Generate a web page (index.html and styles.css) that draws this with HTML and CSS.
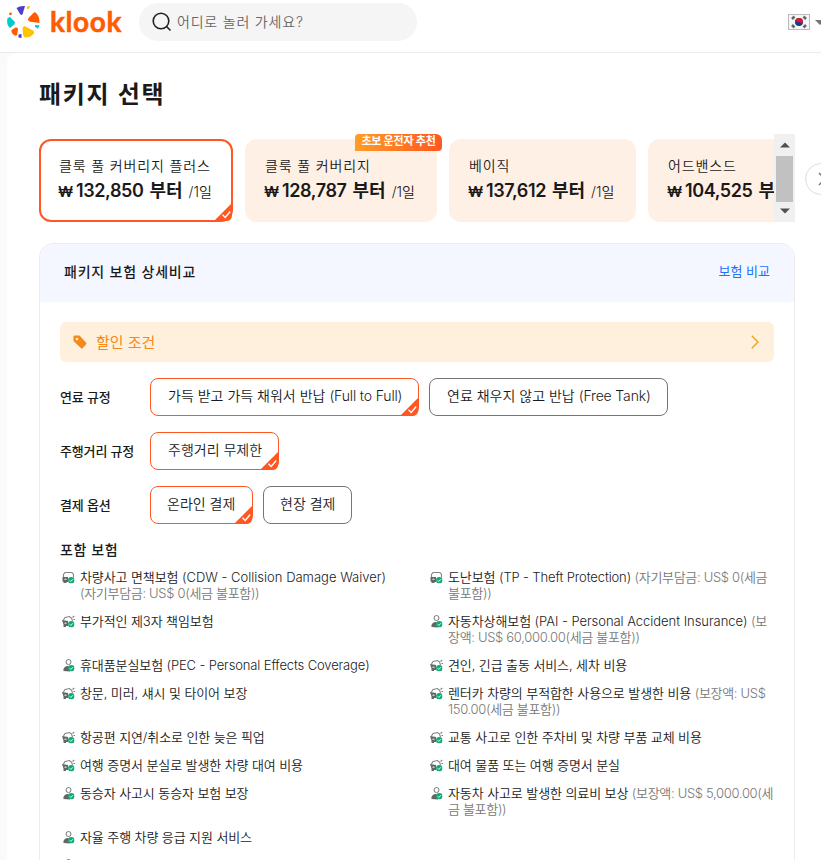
FILE: index.html
```html
<!DOCTYPE html>
<html lang="ko">
<head>
<meta charset="utf-8">
<title>패키지 선택</title>
<link rel="stylesheet" href="styles.css">
</head>
<body>
<svg class="defs" aria-hidden="true">
  <symbol id="ok" viewBox="0 0 6 6"><circle cx="3" cy="3" r="3" fill="#16aa77"/><path d="M1.500 3l1.100 1.100 1.900-2" fill="none" stroke="#fff" stroke-width=".8"/></symbol>
  <symbol id="car" viewBox="0 0 13 13"><path d="M1.500 6V3.500l1.500-2h7l1.500 2v3" fill="none" stroke="#858585" stroke-width="1.100"/><path d="M.5 6h5.500v5H4.500v1H1.500v-1.500H.5z" fill="#666"/><path d="M2.500 8.200h2" stroke="#fff"/><use href="#ok" x="6" y="6" width="6.500" height="6.500"/></symbol>
  <symbol id="crash" viewBox="0 0 13 13"><path d="M1.200 5.500l1.800-3 4.500-1 2 1.500 1 3M10.500 2.500l1.800-1.500M11.500 4.500h1.500" fill="none" stroke="#858585" stroke-width="1.100"/><path d="M0 5l6 1v5H4v1H1.500V9.500z" fill="#666"/><path d="M2.500 8.200h2" stroke="#fff"/><use href="#ok" x="6" y="6" width="6.500" height="6.500"/></symbol>
  <symbol id="person" viewBox="0 0 13 13"><circle cx="6.500" cy="3" r="2.500" fill="none" stroke="#777" stroke-width="1"/><path d="M1.500 12c-.5-3 1.500-5 5-5L8 12.500z" fill="#666"/><use href="#ok" x="6" y="6" width="6.500" height="6.500"/></symbol>
  <symbol id="corner" viewBox="0 0 18 18"><path d="M18 0v12q0 6-6 6H0z" fill="#ff5722"/><path d="M8.500 11.800l2.700 2.700 5-6" fill="none" stroke="#fff" stroke-width="1.400"/></symbol>
</svg>
<header class="top">
  <svg class="logo" width="34" height="34" viewBox="0 0 34 34">
    <path d="M10.500 3Q14 .5 19 1l-2.500 8.500q-1 1-2.500-.5z" fill="#4b3fc9"/>
    <path d="M21 1.500l3-.5-1 2.500-2 .8z" fill="#ffc400"/>
    <path d="M22.500 13l5-5q1.500-1.500 3 .5 3.500 4 3 9.500l-9-1.200q-3.500-.8-2-3.800z" fill="#ff5b00"/>
    <path d="M29 20l4.500.3-1.500 3.500-3-2z" fill="#00cbd1"/>
    <path d="M18.500 21l8.500 4.500q2 2 .5 3.500-3 3.500-8 3.500-2-.5-2.500-3l-.5-6q0-2 2-2.500z" fill="#ffc400"/>
    <path d="M12.500 29.500l3-.5v4l-3-.5z" fill="#4b3fc9"/>
    <path d="M5.500 25l4-2.500q2.500-.5 2.500 1.500l-.8 5.500q-.7 2-2.500 1Q5 28 5.500 25z" fill="#ff5b00"/>
    <path d="M1.500 13l2.500-1 4.500 4.500q1 2.500-1 3.500L4 23Q0 20 1.500 13z" fill="#00cbd1"/>
    <circle cx="4.500" cy="8.800" r="1.400" fill="#ff5b00"/>
  </svg>
  <span class="word">klook</span>
  <div class="search">
    <svg width="20" height="20" viewBox="0 0 20 20" fill="none" stroke="#212121" stroke-width="1.600"><circle cx="9" cy="9" r="7.800"/><path d="M14.500 14.500l4 4"/></svg>
    <span>어디로 놀러 가세요?</span>
  </div>
  <svg class="flag" width="22" height="16" viewBox="0 0 22 16"><rect x=".5" y=".5" width="21" height="15" fill="#f6f6f6" stroke="#bbb"/><circle cx="11" cy="8" r="4" fill="#173a8c"/><path d="M7.300 6.500A4 4 0 0 1 15 8c-1.500 2-3 0-4 0S8 8 7.300 6.500z" fill="#e0142d"/><path d="M4 5l2.500-2.500M4 11l2.500 2.500M18 5l-2.500-2.500M18 11l-2.500 2.500" stroke="#666" stroke-width="2.500"/></svg>
  <svg class="caret" width="10" height="5" viewBox="0 0 10 5"><path d="M0 0h10L5 5z" fill="#757575"/></svg>
</header>
<main>
  <h1>패키지 선택</h1>
  <div class="carousel">
    <div class="track">
      <div class="card on c1"><p>클룩 풀 커버리지 플러스</p><div class="price"><b class="w">₩</b><b class="n">132,850</b><b class="f">부터</b><span>/1일</span></div><svg class="corner"><use href="#corner"/></svg></div>
      <div class="card c2"><em>초보 운전자 추천</em><p>클룩 풀 커버리지</p><div class="price"><b class="w">₩</b><b class="n">128,787</b><b class="f">부터</b><span>/1일</span></div></div>
      <div class="card c3"><p>베이직</p><div class="price"><b class="w">₩</b><b class="n">137,612</b><b class="f">부터</b><span>/1일</span></div></div>
      <div class="card c4"><p>어드밴스드</p><div class="price"><b class="w">₩</b><b class="n">104,525</b><b class="f">부</b></div></div>
    </div>
    <div class="bar"><svg width="10" height="6"><path d="M0 5.500L5 .5l5 5z" fill="#505050"/></svg><i></i><svg width="10" height="6"><path d="M0 .5l5 5 5-5z" fill="#505050"/></svg></div>
    <div class="next"><svg width="8" height="14" viewBox="0 0 8 14"><path d="M1 1l6 6-6 6" fill="none" stroke="#757575" stroke-width="1.500"/></svg></div>
  </div>
  <section>
    <div class="head"><h2>패키지 보험 상세비교</h2><a>보험 비교</a></div>
    <div class="body">
      <div class="deal"><svg width="14" height="14" viewBox="0 0 14 14"><path d="M1.500.5h5L13 7.500q1 1 0 2L9.800 13q-1 1-2 0L.5 6V1.500q0-1 1-1z" fill="#f7881a"/><circle cx="4" cy="4" r="1.300" fill="#fff0dd"/></svg><span>할인 조건</span><svg class="chev" width="8" height="14" viewBox="0 0 8 14"><path d="M.8.8L7 7 .8 13.200" fill="none" stroke="#f5a31a" stroke-width="1.500"/></svg></div>
      <div class="opt"><label>연료 규정</label><div class="btn on b1">가득 받고 가득 채워서 반납 <span>(Full to Full)</span><svg class="corner"><use href="#corner"/></svg></div><div class="btn b2">연료 채우지 않고 반납 <span>(Free Tank)</span></div></div>
      <div class="opt"><label>주행거리 규정</label><div class="btn on b3">주행거리 무제한<svg class="corner"><use href="#corner"/></svg></div></div>
      <div class="opt"><label>결제 옵션</label><div class="btn on b4">온라인 결제<svg class="corner"><use href="#corner"/></svg></div><div class="btn b5">현장 결제</div></div>
      <h3>포함 보험</h3>
      <ul>
        <li><svg><use href="#car"/></svg>차량사고 면책보험 <span>(CDW - Collision Damage Waiver)</span><br><small>(자기부담금: US$ 0(세금 불포함))</small></li>
        <li><svg><use href="#car"/></svg>도난보험 <span class="tight">(TP - Theft Protection)</span> <small>(자기부담금: US$ 0(세금<br>불포함))</small></li>
        <li><svg><use href="#crash"/></svg>부가적인 제3자 책임보험</li>
        <li><svg><use href="#person"/></svg>자동차상해보험 <span class="mid">(PAI - Personal Accident Insurance)</span> <small>(보<br>장액: US$ 60,000.00(세금 불포함))</small></li>
        <li><svg><use href="#person"/></svg>휴대품분실보험 <span class="tight">(PEC - Personal Effects Coverage)</span></li>
        <li><svg><use href="#crash"/></svg>견인, 긴급 출동 서비스, 세차 비용</li>
        <li><svg><use href="#crash"/></svg>창문, 미러, 섀시 및 타이어 보장</li>
        <li><svg><use href="#crash"/></svg>렌터카 차량의 부적합한 사용으로 발생한 비용 <small>(보장액: US$<br>150.00(세금 불포함))</small></li>
        <li><svg><use href="#crash"/></svg>항공편 지연/취소로 인한 늦은 픽업</li>
        <li><svg><use href="#crash"/></svg>교통 사고로 인한 주차비 및 차량 부품 교체 비용</li>
        <li><svg><use href="#crash"/></svg>여행 증명서 분실로 발생한 차량 대여 비용</li>
        <li><svg><use href="#crash"/></svg>대여 물품 또는 여행 증명서 분실</li>
        <li><svg><use href="#person"/></svg>동승자 사고시 동승자 보험 보장</li>
        <li><svg><use href="#person"/></svg>자동차 사고로 발생한 의료비 보상 <small>(보장액: US$ 5,000.00(세<br>금 불포함))</small></li>
        <li><svg><use href="#person"/></svg>자율 주행 차량 응급 지원 서비스</li>
        <li class="blank"></li>
        <li><svg><use href="#person"/></svg></li>
      </ul>
    </div>
  </section>
</main>
</body>
</html>
```

FILE: styles.css
```css
* { box-sizing: border-box; margin: 0; padding: 0; }
body { width: 821px; height: 860px; overflow: hidden; background: #fafafa; color: #1a1a1a; font-family: Inter, "Noto Sans CJK KR", sans-serif; font-weight: 350; white-space: nowrap; }
.defs { display: none; }
.top { height: 53px; background: #fff; border-bottom: 1px solid #ebebeb; display: flex; padding: 3px 0 0 6px; overflow: hidden; }
.logo { margin-top: 2px; flex: none; }
.word { width: 73px; flex: none; margin-left: 10px; font: 700 28px/37px Lato, sans-serif; color: #ff5b00; letter-spacing: .6px; -webkit-text-stroke: .5px #ff5b00; }
.search { width: 278px; flex: none; height: 38px; margin-left: 16px; border-radius: 19px; background: #f5f5f5; display: flex; align-items: center; padding-left: 13px; gap: 5px; font-size: 14px; color: #666; letter-spacing: .8px; }
.search span { padding-bottom: 2px; }
.flag { margin: 11px 0 0 371px; flex: none; }
.caret { margin: 17px 0 0 5px; flex: none; }
main { margin-left: 7px; background: #fff; border-radius: 10px 0 0 0; height: 830px; padding: 23px 0 0 32px; }
h1 { font-size: 24px; line-height: 38px; font-weight: 700; height: 58px; letter-spacing: 1.7px; }
.carousel { display: flex; height: 88px; }
.track { width: 735px; height: 88px; padding-top: 5px; display: flex; gap: 12px; overflow: hidden; flex: none; }
.card { position: relative; flex: none; height: 83px; border-radius: 12px; background: #fff0e6; padding: 17px 0 0 20px; }
.card.on { background: #fff; border: 2px solid #ff5722; padding: 15px 0 0 18px; }
.c1 { width: 194px; } .c2 { width: 192px; } .c3 { width: 187px; } .c4 { width: 192px; }
.card p { font-size: 14px; line-height: 20px; letter-spacing: .85px; }
.price { display: flex; align-items: baseline; line-height: 28px; height: 28px; padding-top: 1px; }
.price b { font-size: 18px; font-weight: 600; }
.price .w { width: 14px; font-size: 15px; margin-left: -1px; }
.price .n { margin-left: 4px; letter-spacing: -.4px; }
.price .f { margin-left: 6px; }
.price span { font-size: 14px; margin-left: 6px; }
.card em { position: absolute; right: -5px; top: -5px; width: 87px; height: 17px; border-radius: 4px 6px 4px 0; background: linear-gradient(90deg, #ff9d26, #ff5722); color: #fff; font: 700 11px/15px Inter, "Noto Sans CJK KR", sans-serif; letter-spacing: -.2px; text-align: center; }
.corner { position: absolute; right: 0; bottom: -1px; width: 18px; height: 18px; }
.card .corner { right: -1px; }
.bar { width: 21px; height: 88px; background: #f0f0f0; display: flex; flex-direction: column; align-items: center; padding-top: 8px; flex: none; }
.bar i { width: 17px; height: 46px; background: #c1c1c1; margin: 8px 0 6px; flex: none; }
.bar svg { flex: none; }
.next { width: 32px; height: 32px; margin: 29px 0 0 10px; border: 1px solid #ddd; border-radius: 50%; flex: none; padding: 8px 0 0 12px; }
.next svg { display: block; }
section { margin-top: 21px; width: 756px; height: 640px; border: 1px solid #ececec; border-radius: 14px 14px 0 0; overflow: hidden; }
.head { height: 58px; background: #f4f7ff; display: flex; justify-content: space-between; align-items: center; padding: 0 24px; }
h2 { font-size: 14px; font-weight: 500; letter-spacing: .8px; padding-bottom: 4px; }
.head a { font-size: 13px; color: #2073f9; font-weight: 400; padding-bottom: 6px; }
.body { padding: 20px; }
.deal { height: 40px; border-radius: 6px; background: #fff0dd; display: flex; align-items: center; padding: 0 15px 0 13px; gap: 9px; color: #f7881a; font-size: 15px; font-weight: 400; margin-bottom: 16px; }
.deal span { padding-bottom: 2px; }
.chev { margin-left: auto; }
.opt { display: flex; height: 38px; margin-bottom: 16px; }
.opt label { width: 90px; font-size: 13px; line-height: 38px; font-weight: 500; letter-spacing: -.15px; }
.btn { position: relative; height: 38px; border: 1px solid #757575; border-radius: 8px; font-size: 14px; line-height: 34px; padding-left: 17px; margin-right: 10px; }
.btn span { letter-spacing: -.15px; }
.btn.on { border-color: #ff5722; }
.b1 { width: 269px; } .b2 { width: 239px; } .b3 { width: 129px; } .b4 { width: 103px; } .b5 { width: 89px; }
.b4, .b5 { padding-left: 16px; }
h3 { font-size: 14px; font-weight: 500; line-height: 20px; letter-spacing: .6px; }
ul { list-style: none; display: grid; grid-template-columns: 368px 346px; row-gap: 12px; margin-top: 9px; }
li { position: relative; padding-left: 20px; font-size: 13px; line-height: 16px; letter-spacing: -.1px; }
li svg { position: absolute; left: 2px; top: 2px; width: 13px; height: 13px; }
li span { letter-spacing: 0; }
li .mid { letter-spacing: -.04px; }
li .tight { letter-spacing: -.13px; }
.blank { height: 16px; }
small { font-size: 13px; color: #777; letter-spacing: -.32px; }
```
